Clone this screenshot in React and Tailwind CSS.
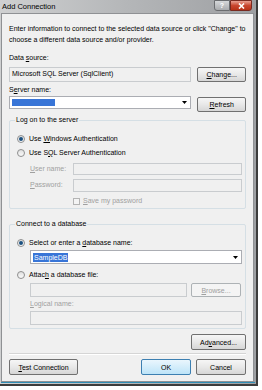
import React from 'react';

const U = ({ children }) => <span className="underline underline-offset-1">{children}</span>;

const Btn = ({ children, className = '', primary = false, disabled = false }) => (
  <div
    className={`flex items-center justify-center rounded-[2px] border text-[7px] leading-none whitespace-nowrap ${
      primary
        ? 'border-[#3c7fb1] bg-linear-to-b from-[#eaf6fd] to-[#bde4f8] text-black'
        : disabled
        ? 'border-[#adb2b5] bg-[#f4f4f4] text-[#a0a0a0]'
        : 'border-[#707070] bg-linear-to-b from-[#f6f6f6] via-[#e8e8e8] to-[#d6d6d6] text-black'
    } ${className}`}
  >
    <span>{children}</span>
  </div>
);

const Radio = ({ checked, children }) => (
  <div className="flex items-center gap-[4px] h-[10px] whitespace-nowrap">
    <div className="w-[8px] h-[8px] rounded-full border border-[#8e8f8f] bg-linear-to-b from-[#e0e0e0] to-[#fafafa] flex items-center justify-center">
      {checked && <div className="w-[4px] h-[4px] rounded-full bg-[#1c5180]" />}
    </div>
    <span>{children}</span>
  </div>
);

const Field = ({ className = '', disabled = false, children, combo = false }) => (
  <div
    className={`flex items-center border whitespace-nowrap ${
      disabled ? 'border-[#c9cccf] bg-[#f0f0f0]' : 'border-[#abadb3] bg-white'
    } ${className}`}
  >
    <div className="flex-1 px-[2px] flex items-center">{children}</div>
    {combo && (
      <svg width="5" height="3" viewBox="0 0 5 3" className="mr-[3px]">
        <path d="M0 0h5L2.5 3z" fill="#000" />
      </svg>
    )}
  </div>
);

const Group = ({ title, className = '', children }) => (
  <div className={`relative border border-[#d5dfe5] rounded-[2px] ${className}`}>
    <div className="absolute left-[5px] top-[-6px] bg-[#f0f0f0] px-[1px] leading-[10px] whitespace-nowrap">{title}</div>
    {children}
  </div>
);

export default function App() {
  return (
    <div className="w-[262px] h-[390px] bg-white overflow-hidden font-['Liberation_Sans',Arial,sans-serif] text-[7px] text-black">
      <div className="w-[258px] h-[386px] flex flex-col bg-linear-to-r from-[#cfd0d1] via-[#b4b6b8] to-[#9ea0a3] border-r-[2px] border-b-[2px] border-[#3c3c3c]">
        {/* title bar */}
        <div className="h-[13px] flex items-start justify-between">
          <div className="pl-[2px] pt-[2px] text-[7.5px] leading-[9px]">Add Connection</div>
          <div className="flex mr-[4px]">
            <div className="w-[16px] h-[11px] rounded-bl-[3px] border border-[#6b6d70] bg-linear-to-b from-[#d6d8da] to-[#a9abae] flex items-center justify-center text-white text-[7px] font-bold leading-none">?</div>
            <div className="w-[22px] h-[11px] rounded-br-[3px] border border-[#7a2a20] bg-linear-to-b from-[#e8a093] via-[#c9462f] to-[#b83217] flex items-center justify-center">
              <svg width="7" height="6" viewBox="0 0 7 6">
                <path d="M1 0.5l5 5M6 0.5l-5 5" stroke="#fff" strokeWidth="1.6" />
              </svg>
            </div>
          </div>
        </div>
        {/* client */}
        <div className="flex-1 ml-[1px] mr-[2px] bg-[#f0f0f0] border border-[#8f9194] flex flex-col px-[7px]">
          <div className="mt-[9px] leading-[11px] whitespace-nowrap">
            Enter information to connect to the selected data source or click "Change" to
            <br />
            choose a different data source and/or provider.
          </div>
          <div className="mt-[8px] leading-[10px]">Data <U>s</U>ource:</div>
          <div className="mt-[4px] flex items-center gap-[6px]">
            <Field disabled className="w-[184px] h-[15px]">Microsoft SQL Server (SqlClient)</Field>
            <Btn className="w-[49px] h-[15px]"><U>C</U>hange...</Btn>
          </div>
          <div className="mt-[3px] leading-[10px]">S<U>e</U>rver name:</div>
          <div className="mt-[1px] flex items-start gap-[6px]">
            <Field combo className="w-[184px] h-[13px]">
              <div className="w-[43px] h-[7px] bg-[#3875d7]" />
            </Field>
            <Btn className="w-[49px] h-[15px] mt-[1px]"><U>R</U>efresh</Btn>
          </div>

          <Group title="Log on to the server" className="mt-[8px] h-[89px]">
            <div className="pl-[7px] pt-[13px] flex flex-col">
              <Radio checked>Use <U>W</U>indows Authentication</Radio>
              <div className="mt-[4px]">
                <Radio>Use S<U>Q</U>L Server Authentication</Radio>
              </div>
              <div className="mt-[5px] flex items-center">
                <span className="w-[56px] pl-[13px] text-[#a0a0a0] whitespace-nowrap"><U>U</U>ser name:</span>
                <Field disabled className="w-[169px] h-[12px]" />
              </div>
              <div className="mt-[4px] flex items-center">
                <span className="w-[56px] pl-[13px] text-[#a0a0a0] whitespace-nowrap"><U>P</U>assword:</span>
                <Field disabled className="w-[169px] h-[13px]" />
              </div>
              <div className="mt-[4px] ml-[56px] flex items-center gap-[3px] text-[#a0a0a0] whitespace-nowrap">
                <div className="w-[7px] h-[7px] border border-[#b4b4b4] bg-[#f4f4f4]" />
                <span><U>S</U>ave my password</span>
              </div>
            </div>
          </Group>

          <Group title="Connect to a database" className="mt-[15px] h-[105px]">
            <div className="pl-[7px] pt-[13px] flex flex-col">
              <Radio checked>Select or enter a <U>d</U>atabase name:</Radio>
              <Field combo className="ml-[13px] mt-[2px] w-[212px] h-[14px]">
                <span className="bg-[#3875d7] text-white px-[1px] leading-[9px]">SampleDB</span>
              </Field>
              <div className="mt-[6px]">
                <Radio>Attac<U>h</U> a database file:</Radio>
              </div>
              <div className="ml-[13px] mt-[3px] flex items-center gap-[4px]">
                <Field disabled className="w-[157px] h-[14px]" />
                <Btn disabled className="w-[50px] h-[14px]"><U>B</U>rowse...</Btn>
              </div>
              <div className="ml-[13px] mt-[2px] leading-[10px] text-[#a0a0a0]"><U>L</U>ogical name:</div>
              <Field disabled className="ml-[13px] mt-[2px] w-[212px] h-[14px]" />
            </div>
          </Group>

          <div className="mt-[5px] flex justify-end">
            <Btn className="w-[55px] h-[16px]">Ad<U>v</U>anced...</Btn>
          </div>
          <div className="mt-[3px] border-t border-[#d5d5d5] border-b border-b-white" />
          <div className="mt-[4px] flex items-center">
            <Btn className="w-[69px] h-[16px]"><U>T</U>est Connection</Btn>
            <div className="flex-1" />
            <Btn primary className="w-[50px] h-[16px]">OK</Btn>
            <Btn className="w-[50px] h-[16px] ml-[5px]">Cancel</Btn>
          </div>
        </div>
        <div className="h-[1px] bg-[#2f8db5] mx-[1px] mb-[1px]" />
      </div>
    </div>
  );
}
